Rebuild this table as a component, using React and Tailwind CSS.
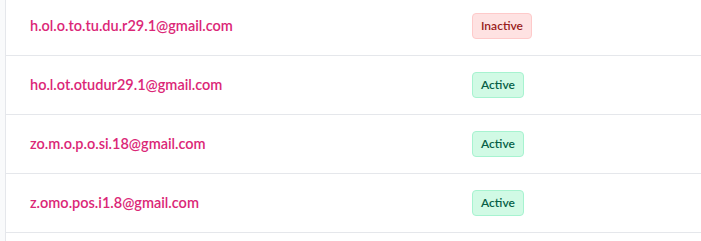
import React from 'react';

const rows = [
    { email: 'h.ol.o.to.tu.du.r29.1@gmail.com', active: false },
    { email: 'ho.l.ot.otudur29.1@gmail.com', active: true },
    { email: 'zo.m.o.p.o.si.18@gmail.com', active: true },
    { email: 'z.omo.pos.i1.8@gmail.com', active: true },
];

const StatusBadge = ({ active }) =>
    active ? (
        <span className="inline-flex items-center h-[26px] px-2 rounded border border-[#a7f3d0] bg-[#d1fae5] text-[#065f46] text-xs font-semibold">
            Active
        </span>
    ) : (
        <span className="inline-flex items-center h-[26px] px-2 rounded border border-[#fecaca] bg-[#fee2e2] text-[#991b1b] text-xs font-semibold">
            Inactive
        </span>
    );

export default function App() {
    return (
        <div className="w-[701px] h-[241px] overflow-hidden bg-[#f9fafb] flex font-['Lato',sans-serif]">
            <div className="w-[5px] shrink-0"></div>
            <div className="flex-1 bg-white border-l border-[#e5e7eb]">
                <div className="-mt-[3px]">
                    {rows.map((r) => (
                        <div key={r.email} className="flex items-center h-[59px] border-b border-[#e5e7eb]">
                            <div className="w-[442px] px-6 text-[14.5px] font-semibold text-[#db2777]">
                                {r.email}
                            </div>
                            <div className="px-6 flex">
                                <StatusBadge active={r.active} />
                            </div>
                        </div>
                    ))}
                </div>
            </div>
        </div>
    );
}
